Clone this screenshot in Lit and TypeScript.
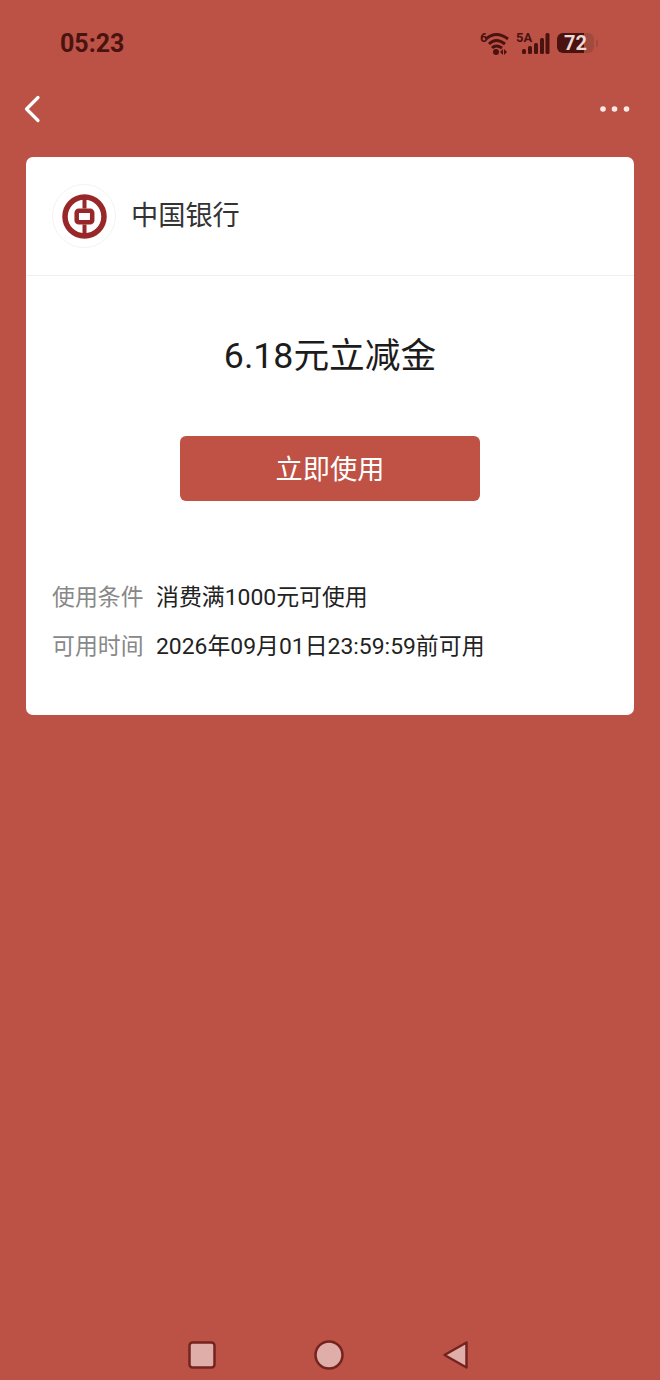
import { LitElement, css, html } from "lit";
import { customElement } from "lit/decorators.js";

@customElement("app-root")
export class AppRoot extends LitElement {
  static styles = css`
    :host {
      display: block;
      font-family: "Roboto", "Noto Sans CJK SC", sans-serif;
    }

    .page {
      height: 1380px;
      background: #bc5245;
      display: flex;
      flex-direction: column;
      overflow: hidden;
    }

    .status {
      height: 86px;
      box-sizing: border-box;
      padding: 0 62px 0 60px;
      display: flex;
      align-items: center;
      justify-content: space-between;
      color: #4a1310;
    }

    .time {
      font-size: 25px;
      font-weight: 700;
    }

    .status-icons {
      display: flex;
      align-items: center;
      gap: 7px;
    }

    .status-icons svg {
      display: block;
    }

    .small {
      font: 700 13px "Roboto", sans-serif;
      fill: #4a1310;
    }

    .battery {
      display: flex;
      align-items: center;
      gap: 2px;
    }

    .battery-body {
      width: 37px;
      height: 20px;
      border-radius: 6px;
      background: linear-gradient(90deg, #4a1310 72%, #a04a40 72%);
      color: #f0d8d4;
      font-size: 20px;
      font-weight: 700;
      line-height: 20px;
      text-align: center;
    }

    .battery-tip {
      width: 2px;
      height: 7px;
      border-radius: 1px;
      background: #a04a40;
    }

    .topbar {
      height: 71px;
      padding: 0 30px 0 22px;
      display: flex;
      align-items: flex-start;
      justify-content: space-between;
    }

    .topbar svg {
      display: block;
    }

    .back {
      margin-top: 8px;
    }

    .more {
      margin-top: 20px;
    }

    .card {
      margin: 0 26px;
      height: 558px;
      background: #fff;
      border-radius: 7px;
      box-sizing: border-box;
    }

    .bank {
      height: 119px;
      box-sizing: border-box;
      padding: 0 26px;
      display: flex;
      align-items: center;
      gap: 15px;
      border-bottom: 1px solid #efefef;
      font-size: 27.200px;
      color: #333;
    }

    .bank span {
      padding-bottom: 6px;
    }

    .logo {
      width: 64px;
      height: 64px;
      border-radius: 50%;
      border: 1px solid #f3f3f3;
      box-sizing: border-box;
      display: flex;
      align-items: center;
      justify-content: center;
    }

    .amount {
      margin-top: 53px;
      text-align: center;
      font-size: 35.700px;
      line-height: 54px;
      color: #1c1c1c;
    }

    .use {
      display: block;
      width: 300px;
      height: 65px;
      margin: 53px auto 0;
      padding: 0 0 4px;
      border: none;
      border-radius: 6px;
      background: #bf5145;
      color: #fff;
      font: inherit;
      font-size: 27.200px;
    }

    .rows {
      margin-top: 80px;
      padding: 0 26px;
      display: grid;
      grid-template-columns: 104px 1fr;
      row-gap: 15px;
      font-size: 22.900px;
      line-height: 34px;
    }

    .label {
      color: #888;
    }

    .value {
      color: #222;
    }

    .nav {
      margin-top: auto;
      height: 40px;
      padding-left: 187px;
      display: flex;
      align-items: flex-start;
      gap: 97px;
    }
  `;

  render() {
    return html`
      <div class="page">
        <div class="status">
          <span class="time">05:23</span>
          <div class="status-icons">
            <svg width="29" height="24" viewBox="0 0 29 24">
              <text class="small" x="0" y="11">6</text>
              <g fill="none" stroke="#4a1310" stroke-width="3">
                <path d="M6 8Q16 -1 28 8" />
                <path d="M9 13Q16 6 25 13" />
                <path d="M12 17Q16 13 22 17" />
              </g>
              <circle cx="16" cy="21" r="3" fill="#4a1310" />
              <path d="M20 21l3-3v6zM24 18l3 3-3 3z" fill="#4a1310" />
            </svg>
            <svg width="34" height="24" viewBox="0 0 34 24">
              <text class="small" x="0" y="11">5A</text>
              <g fill="#4a1310">
                <rect x="6" y="18" width="4" height="5" rx="1.500" />
                <rect x="12" y="15" width="4" height="8" rx="1.500" />
                <rect x="18" y="12" width="4" height="11" rx="1.500" />
                <rect x="24" y="7" width="4" height="16" rx="1.500" />
                <rect x="29.500" y="2" width="4" height="21" rx="1.500" />
              </g>
            </svg>
            <div class="battery">
              <div class="battery-body">72</div>
              <div class="battery-tip"></div>
            </div>
          </div>
        </div>

        <div class="topbar">
          <svg class="back" width="22" height="30" viewBox="0 0 22 30">
            <path
              d="M16 3.500L4.500 15L16 26.500"
              fill="none"
              stroke="#fff"
              stroke-width="3.200"
              stroke-linecap="round"
              stroke-linejoin="round"
            />
          </svg>
          <svg class="more" width="30" height="6" viewBox="0 0 30 6">
            <circle cx="3" cy="3" r="2.800" fill="#fbe9e6" />
            <circle cx="14.500" cy="3" r="2.800" fill="#fbe9e6" />
            <circle cx="26.500" cy="3" r="2.800" fill="#fbe9e6" />
          </svg>
        </div>

        <div class="card">
          <div class="bank">
            <div class="logo">
              <svg width="46" height="46" viewBox="0 0 46 46">
                <g fill="none" stroke="#98272a" transform="translate(0.500 0.500)">
                  <circle cx="23" cy="23" r="19.500" stroke-width="5.500" />
                  <rect x="15.200" y="17.200" width="15.500" height="11.500" rx="2" stroke-width="4.500" />
                  <path d="M23 3V15M23 31V43" stroke-width="4" />
                </g>
              </svg>
            </div>
            <span>中国银行</span>
          </div>
          <div class="amount">6.18元立减金</div>
          <button class="use">立即使用</button>
          <div class="rows">
            <span class="label">使用条件</span>
            <span class="value">消费满1000元可使用</span>
            <span class="label">可用时间</span>
            <span class="value">2026年09月01日23:59:59前可用</span>
          </div>
        </div>

        <div class="nav">
          <svg width="30" height="30" viewBox="0 0 30 30">
            <rect x="2.500" y="2.500" width="25" height="25" rx="3" fill="#e0aea8" stroke="#74231f" stroke-width="2.500" />
          </svg>
          <svg width="30" height="30" viewBox="0 0 30 30">
            <circle cx="15" cy="15" r="13.500" fill="#e0aea8" stroke="#74231f" stroke-width="2.500" />
          </svg>
          <svg width="28" height="30" viewBox="0 0 28 30">
            <path d="M25.500 2.500L3.500 15L25.500 27.500Z" fill="#e0aea8" stroke="#74231f" stroke-width="2.500" stroke-linejoin="round" />
          </svg>
        </div>
      </div>
    `;
  }
}
